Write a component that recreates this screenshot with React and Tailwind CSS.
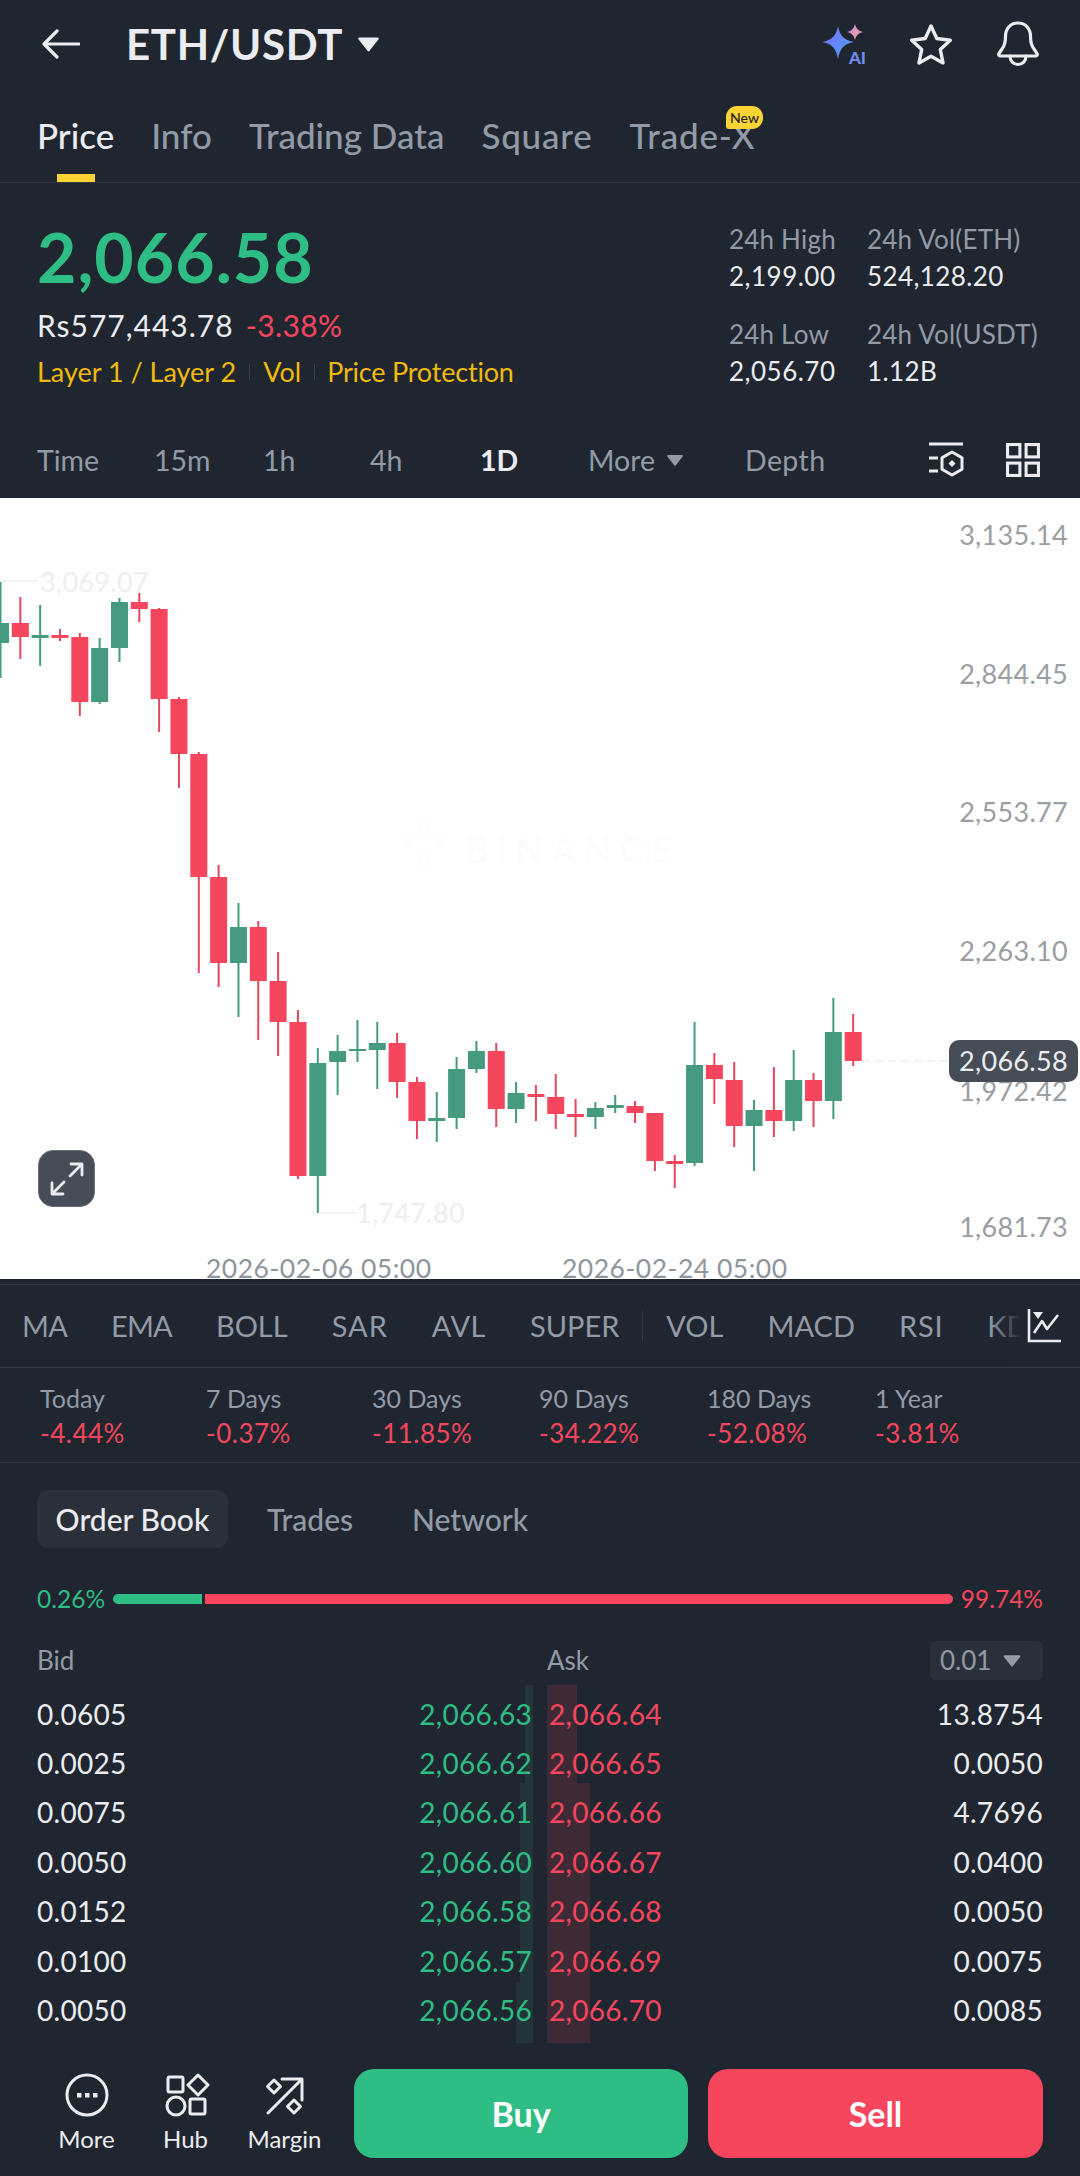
import React from 'react';

const tabs = [
  ['Price', 'text-[#eaecef]'],
  ['Info', ''],
  ['Trading Data', ''],
  ['Square', 'tracking-[0.8px]'],
  ['Trade-X', 'tracking-[0.8px]'],
];
const indicators = [
  ['MA', 'tracking-[-0.8px]'],
  ['EMA', 'tracking-[-0.8px]'],
  ['BOLL', ''],
  ['SAR', 'tracking-[1px]'],
  ['AVL', 'tracking-[0.5px]'],
  ['SUPER', ''],
  ['|', ''],
  ['VOL', ''],
  ['MACD', ''],
  ['RSI', 'tracking-[0.8px]'],
  ['KDJ', ''],
];
const periods = [
  ['Today', '-4.44%'],
  ['7 Days', '-0.37%'],
  ['30 Days', '-11.85%'],
  ['90 Days', '-34.22%'],
  ['180 Days', '-52.08%'],
  ['1 Year', '-3.81%'],
];
const book = [
  ['0.0605', '2,066.63', '2,066.64', '13.8754'],
  ['0.0025', '2,066.62', '2,066.65', '0.0050'],
  ['0.0075', '2,066.61', '2,066.66', '4.7696'],
  ['0.0050', '2,066.60', '2,066.67', '0.0400'],
  ['0.0152', '2,066.58', '2,066.68', '0.0050'],
  ['0.0100', '2,066.57', '2,066.69', '0.0075'],
  ['0.0050', '2,066.56', '2,066.70', '0.0085'],
];
// wick top, wick bottom, body top, body bottom (page px, chart starts at 498)
const candles = [
  ['g', 582, 678, 623, 643], ['r', 597, 659, 623, 637], ['g', 605, 666, 635, 638], ['r', 629, 641, 635, 638],
  ['r', 633, 716, 637, 702], ['g', 638, 704, 648, 702], ['g', 598, 662, 602, 648], ['r', 593, 622, 602, 609],
  ['r', 608, 732, 609, 699], ['r', 697, 788, 699, 754], ['r', 752, 973, 754, 877], ['r', 865, 987, 877, 963],
  ['g', 903, 1017, 927, 963], ['r', 921, 1040, 927, 981], ['r', 952, 1056, 981, 1022], ['r', 1010, 1179, 1022, 1176],
  ['g', 1048, 1213, 1063, 1176], ['g', 1035, 1095, 1051, 1062], ['g', 1020, 1062, 1049, 1051], ['g', 1022, 1089, 1043, 1050],
  ['r', 1033, 1098, 1043, 1082], ['r', 1077, 1139, 1082, 1121], ['g', 1092, 1142, 1118, 1121], ['g', 1057, 1129, 1069, 1118],
  ['g', 1041, 1073, 1051, 1069], ['r', 1043, 1127, 1051, 1109], ['g', 1082, 1123, 1093, 1109], ['r', 1085, 1121, 1094, 1097],
  ['r', 1074, 1129, 1097, 1114], ['r', 1099, 1137, 1114, 1117], ['g', 1102, 1129, 1108, 1117], ['g', 1095, 1113, 1105, 1108],
  ['r', 1101, 1123, 1106, 1113], ['r', 1113, 1171, 1113, 1161], ['r', 1155, 1188, 1161, 1164], ['g', 1022, 1166, 1065, 1163],
  ['r', 1053, 1104, 1065, 1079], ['r', 1062, 1147, 1080, 1126], ['g', 1100, 1171, 1110, 1126], ['r', 1067, 1137, 1110, 1121],
  ['g', 1050, 1131, 1080, 1121], ['r', 1073, 1127, 1080, 1101], ['g', 998, 1119, 1032, 1101], ['r', 1014, 1066, 1032, 1061],
];
const axis = [
  ['3,135.14', 'top-[19px]'],
  ['2,844.45', 'top-[158px]'],
  ['2,553.77', 'top-[296px]'],
  ['2,263.10', 'top-[435px]'],
  ['1,972.42', 'top-[575px]'],
  ['1,681.73', 'top-[711px]'],
];

const Caret = ({ className }) => (
  <svg viewBox="0 0 16 12" className={className} fill="currentColor">
    <path d="M1.5 1h13a.8.8 0 0 1 .6 1.3L8.6 10.6a.8.8 0 0 1-1.2 0L.9 2.3A.8.8 0 0 1 1.5 1z" />
  </svg>
);

const Candles = () => (
  <svg viewBox="0 498 1080 781" className="absolute inset-0 w-full h-full">
    {candles.map(([c, wt, wb, bt, bb], i) => {
      const x = 0.5 + i * 19.83;
      const fill = c === 'g' ? '#459a80' : '#f6465d';
      return (
        <g key={i} fill={fill}>
          <rect x={x - 1} y={wt} width="2" height={wb - wt} fill={c === 'g' ? '#459a80' : '#e0485f'} />
          <rect x={x - 8.5} y={bt} width="17" height={bb - bt} />
        </g>
      );
    })}
    <line x1="2" y1="581" x2="38" y2="581" stroke="#ededed" strokeWidth="1.5" />
    <line x1="320" y1="1213" x2="356" y2="1213" stroke="#ededed" strokeWidth="1.5" />
    <line x1="862" y1="1061" x2="949" y2="1061" stroke="#eeeeee" strokeWidth="1.5" strokeDasharray="8 5" />
    <g fill="#fcfcfc">
      <path d="M424 820l8 8-8 8-8-8zM408 836l6 6-6 6-6-6zM440 836l6 6-6 6-6-6zM424 852l8 8-8 8-8-8z" />
    </g>
  </svg>
);

const App = () => {
  return (
    <div className="w-[1080px] h-[2176px] bg-[#1f2630] overflow-hidden flex flex-col text-[#eaecef] font-['Lato','Liberation_Sans',sans-serif]">
      {/* Header */}
      <div className="h-[88px] flex items-center pl-[42px] pr-[41px]">
        <svg viewBox="0 0 38 30" className="w-[38px] h-[30px]" fill="none" stroke="#eaecef" strokeWidth="3.2" strokeLinecap="round" strokeLinejoin="round">
          <path d="M37 15H2M15 2L2 15l13 13" />
        </svg>
        <div className="ml-[46px] text-[42px] font-bold tracking-[0.7px]">ETH/USDT</div>
        <Caret className="ml-[14px] w-[23px] h-[17px] text-[#eaecef]" />
        <div className="ml-auto flex items-center">
          <div className="relative w-[44px] h-[40px]">
            <svg viewBox="0 0 44 40" className="w-full h-full">
              <defs>
                <linearGradient id="aiBig" x1="0" y1="0" x2="1" y2="1">
                  <stop offset="0" stopColor="#7a6cf5" />
                  <stop offset="1" stopColor="#4fa3f7" />
                </linearGradient>
                <linearGradient id="aiSmall" x1="0" y1="0" x2="1" y2="1">
                  <stop offset="0" stopColor="#c58af0" />
                  <stop offset="1" stopColor="#f0a88c" />
                </linearGradient>
              </defs>
              <path d="M16 2c2 10 6 14 16 16-10 2-14 6-16 17-2-11-6-15-16-17 10-2 14-6 16-16z" fill="url(#aiBig)" />
              <path d="M33 0c1 4.500 3.500 7 8 8-4.500 1-7 3.500-8 8-1-4.500-3.500-7-8-8 4.500-1 7-3.500 8-8z" fill="url(#aiSmall)" />
            </svg>
            <span className="absolute right-0 top-[26px] text-[17px] leading-[16px] font-black text-[#6f8bf2]">AI</span>
          </div>
          <svg viewBox="0 0 44 42" className="ml-[43px] w-[44px] h-[42px]" fill="none" stroke="#eaecef" strokeWidth="3.4" strokeLinejoin="round">
            <path d="M22 3l5.800 12.500 13.500 1.700-10 9.300 2.700 13.400L22 33.200l-12 6.700 2.700-13.400-10-9.300 13.500-1.700z" />
          </svg>
          <svg viewBox="0 0 42 46" className="ml-[44px] w-[42px] h-[46px]" fill="none" stroke="#eaecef" strokeWidth="3.2" strokeLinejoin="round" strokeLinecap="round">
            <path d="M21 2c-8 0-12.500 6-12.500 13.500 0 6-1 9.500-3.500 12.500l-3 4.500c-.8 1.300 0 2.500 1.500 2.500h35c1.500 0 2.300-1.200 1.500-2.500L37 28c-2.500-3-3.500-6.500-3.500-12.500C33.500 8 29 2 21 2z" />
            <path d="M13 35c0 5 3.500 8.500 8 8.500s8-3.500 8-8.500" />
          </svg>
        </div>
      </div>

      {/* Tabs */}
      <div className="relative h-[95px] border-b border-[#333a45] flex items-center pl-[37px] gap-[37px] text-[35px] text-[#929aa5] font-medium">
        {tabs.map(([t, cls]) => (
          <div key={t} className={cls}>{t}</div>
        ))}
        <span className="absolute left-[726px] top-[18px] w-[37px] h-[23px] rounded-[11px] rounded-bl-[3px] bg-[#fcd535] text-[#1e2329] text-[14px] leading-[23px] text-center">New</span>
        <span className="absolute left-[57px] bottom-0 w-[38px] h-[8px] bg-[#fcd535]" />
      </div>

      {/* Summary */}
      <div className="h-[241px] flex justify-between pl-[37px]">
        <div className="pt-[40px]">
          <div className="h-[68px] leading-[68px] text-[68px] font-bold tracking-[1px] text-[#2ebd85]">2,066.58</div>
          <div className="mt-[14px] h-[40px] leading-[40px] text-[30px] flex">
            <span className="tracking-[1px]">Rs577,443.78</span>
            <span className="ml-[12px] tracking-[0.4px] text-[#f6465d]">-3.38%</span>
          </div>
          <div className="mt-[9px] h-[36px] leading-[36px] text-[27px] text-[#f0b90b] flex items-center">
            <span>Layer 1 / Layer 2</span>
            <span className="mx-[13px] w-[1px] h-[16px] bg-[#3a404a]" />
            <span>Vol</span>
            <span className="mx-[13px] w-[1px] h-[16px] bg-[#3a404a]" />
            <span className="-ml-[1px] tracking-[-0.2px]">Price Protection</span>
          </div>
        </div>
        <div className="w-[351px] pt-[38px] grid grid-cols-[138px_1fr] text-[26px] leading-[36px] content-start">
          <div className="tracking-[0.2px] text-[#929aa5]">24h High</div>
          <div className="tracking-[0.2px] text-[#929aa5]">24h Vol(ETH)</div>
          <div className="mt-[1px] tracking-[0.5px]">2,199.00</div>
          <div className="mt-[1px] tracking-[0.4px]">524,128.20</div>
          <div className="mt-[22px] tracking-[0.2px] text-[#929aa5]">24h Low</div>
          <div className="mt-[22px] tracking-[0.2px] text-[#929aa5]">24h Vol(USDT)</div>
          <div className="mt-[1px] tracking-[0.5px]">2,056.70</div>
          <div className="mt-[1px] tracking-[0.4px]">1.12B</div>
        </div>
      </div>

      {/* Intervals */}
      <div className="h-[74px] pb-[2px] flex items-center pl-[37px] pr-[40px] text-[28.5px] text-[#929aa5]">
        <span className="w-[117px]">Time</span>
        <span className="w-[109px]">15m</span>
        <span className="w-[107px]">1h</span>
        <span className="w-[110px]">4h</span>
        <span className="w-[108px] font-bold text-[#eaecef]">1D</span>
        <span>More</span>
        <Caret className="ml-[11px] w-[18px] h-[13px] text-[#929aa5]" />
        <span className="ml-[61px] tracking-[0.4px]">Depth</span>
        <div className="ml-auto flex items-center">
          <svg viewBox="0 0 36 40" className="w-[36px] h-[40px]" fill="none" stroke="#eaecef" strokeWidth="3">
            <path d="M1 4h34M1 18h9M1 31h9" />
            <path d="M24 12l10 5.800v11.400L24 35l-10-5.800V17.800z" strokeLinejoin="round" />
            <path d="M24 20l3.500 3.500-3.500 3.500-3.500-3.500z" fill="#eaecef" stroke="none" />
          </svg>
          <svg viewBox="0 0 33 33" className="ml-[42px] w-[34px] h-[34px]" fill="none" stroke="#eaecef" strokeWidth="3">
            <rect x="1.500" y="1.500" width="12" height="12" />
            <rect x="19.500" y="1.500" width="12" height="12" />
            <rect x="1.500" y="19.500" width="12" height="12" />
            <rect x="19.500" y="19.500" width="12" height="12" />
          </svg>
        </div>
      </div>

      {/* Chart */}
      <div className="relative h-[781px] bg-white overflow-hidden shrink-0">
        <Candles />
        <span className="absolute left-[465px] top-[324px] text-[36px] font-bold tracking-[8px] text-[#fcfcfc]">BINANCE</span>
        {axis.map(([v, top]) => (
          <span key={v} className={`absolute right-[12px] text-[27px] leading-[36px] tracking-[0.3px] text-[#9b9ea3] ${top}`}>{v}</span>
        ))}
        <span className="absolute left-[40px] top-[66px] text-[27px] leading-[36px] tracking-[0.3px] text-[#eeeeee]">3,069.07</span>
        <span className="absolute left-[356px] top-[697px] text-[27px] leading-[36px] tracking-[0.3px] text-[#eeeeee]">1,747.80</span>
        <span className="absolute left-[206px] top-[752px] text-[26.5px] leading-[36px] tracking-[0.5px] text-[#8f959c]">2026-02-06 05:00</span>
        <span className="absolute left-[562px] top-[752px] text-[26.5px] leading-[36px] tracking-[0.5px] text-[#8f959c]">2026-02-24 05:00</span>
        <div className="absolute left-[38px] top-[652px] w-[57px] h-[57px] rounded-[15px] bg-[#474d57] border border-[#6a6f78] flex items-center justify-center">
          <svg viewBox="0 0 36 36" className="w-[36px] h-[36px]" fill="none" stroke="#eaecef" strokeWidth="2.800" strokeLinecap="round" strokeLinejoin="round">
            <path d="M21 15L33 3M22 3h11v11M15 21L3 33M14 33H3V22" />
          </svg>
        </div>
        <div className="absolute left-[949px] top-[542px] w-[129px] h-[42px] rounded-[10px] bg-[#474d57] text-[27px] leading-[42px] tracking-[0.3px] text-center text-[#eaecef]">2,066.58</div>
      </div>

      {/* Indicators */}
      <div className="relative mt-[5px] h-[84px] border-y border-[#333a45] flex items-center pl-[22px] gap-[44px] text-[29px] text-[#929aa5] overflow-hidden">
        {indicators.map(([t, cls], i) =>
          t === '|' ? (
            <span key={i} className="-mx-[21px] w-[1px] h-[30px] bg-[#333a45] shrink-0" />
          ) : (
            <span key={t} className={`shrink-0 ${cls}`}>{t}</span>
          )
        )}
        <div className="absolute right-0 top-0 h-full w-[90px] flex items-center justify-end pr-[19px] bg-gradient-to-r from-transparent to-[#1f2630] to-[35%]">
          <svg viewBox="0 0 34 34" className="w-[34px] h-[34px]" fill="none" stroke="#eaecef" strokeWidth="2.600">
            <path d="M2 0v32h32" />
            <path d="M7 24l8-12 5 8 11-14" strokeLinejoin="round" />
            <path d="M6 3h10l-5 7z" fill="#eaecef" stroke="none" />
          </svg>
        </div>
      </div>

      {/* Period changes */}
      <div className="h-[95px] border-b border-[#333a45] pt-[13px] pl-[40px] grid grid-cols-[166px_166px_167px_168px_168px_1fr] text-[25px] leading-[35px]">
        {periods.map(([label, value]) => (
          <div key={label}>
            <div className="text-[#929aa5]">{label}</div>
            <div className="text-[26px] tracking-[0.5px] text-[#f6465d]">{value}</div>
          </div>
        ))}
      </div>

      {/* Book tabs */}
      <div className="mt-[27px] h-[58px] pl-[37px] flex items-center text-[30px] text-[#929aa5] font-medium">
        <div className="w-[191px] h-full rounded-[12px] bg-[#2a303a] text-[#eaecef] flex items-center justify-center">Order Book</div>
        <span className="ml-[39px]">Trades</span>
        <span className="ml-[59px]">Network</span>
      </div>

      {/* Ratio bar */}
      <div className="mt-[36px] h-[30px] px-[37px] flex items-center text-[24.5px]">
        <span className="w-[76px] text-[#2ebd85]">0.26%</span>
        <div className="w-[89px] h-[10px] rounded-l-full bg-[#2ebd85]" />
        <div className="ml-[3px] w-[748px] h-[10px] rounded-r-full bg-[#f6465d]" />
        <span className="ml-auto text-[#f6465d]">99.74%</span>
      </div>

      {/* Book header */}
      <div className="mt-[27px] h-[39px] pl-[37px] pr-[37px] flex items-center text-[26px] text-[#929aa5]">
        <span className="w-[510px]">Bid</span>
        <span>Ask</span>
        <div className="ml-auto w-[113px] h-full rounded-[6px] bg-[#2a303a] flex items-center pl-[10px]">
          <span className="w-[46px]">0.01</span>
          <Caret className="ml-[16px] w-[20px] h-[14px] text-[#929aa5]" />
        </div>
      </div>

      {/* Book rows */}
      <div className="relative mt-[9px] h-[346px] text-[28px]">
        <div className="absolute left-[525px] top-[-4px] w-[8px] h-[98px] bg-[#24353a]" />
        <div className="absolute left-[520px] top-[94px] w-[13px] h-[199px] bg-[#24353a]" />
        <div className="absolute left-[516px] top-[293px] w-[17px] h-[61px] bg-[#24353a]" />
        <div className="absolute left-[547px] top-[-4px] w-[30px] h-[98px] bg-[#3e2a35]" />
        <div className="absolute left-[547px] top-[94px] w-[43px] h-[260px] bg-[#3e2a35]" />
        {book.map(([bid, bidPrice, askPrice, ask]) => (
          <div key={bidPrice} className="relative h-[49.4px] pl-[37px] pr-[37px] flex items-center tracking-[0.3px]">
            <span className="w-[380px]">{bid}</span>
            <span className="w-[115px] text-right text-[#2ebd85]">{bidPrice}</span>
            <span className="ml-[17px] text-[#f6465d]">{askPrice}</span>
            <span className="ml-auto">{ask}</span>
          </div>
        ))}
      </div>

      {/* Bottom actions */}
      <div className="mt-[34px] h-[89px] pl-[37px] pr-[37px] flex">
        <div className="w-[297px] flex text-[24px]">
          <div className="w-[99px] flex flex-col items-center">
            <svg viewBox="0 0 48 48" className="mt-[2px] w-[48px] h-[48px]" fill="none" stroke="#eaecef" strokeWidth="3">
              <circle cx="24" cy="24" r="20" />
              <rect x="14" y="22" width="4.500" height="4.500" fill="#eaecef" stroke="none" />
              <rect x="22" y="22" width="4.500" height="4.500" fill="#eaecef" stroke="none" />
              <rect x="30" y="22" width="4.500" height="4.500" fill="#eaecef" stroke="none" />
            </svg>
            <span className="mt-[4px] leading-[32px]">More</span>
          </div>
          <div className="w-[99px] flex flex-col items-center">
            <svg viewBox="0 0 48 48" className="mt-[2px] w-[48px] h-[48px]" fill="none" stroke="#eaecef" strokeWidth="3">
              <rect x="6" y="6" width="15" height="15" rx="1.500" />
              <path d="M36 4l10 10-10 10-10-10z" strokeLinejoin="round" />
              <circle cx="14" cy="35" r="9" />
              <rect x="28" y="28" width="15" height="15" rx="1.500" />
            </svg>
            <span className="mt-[4px] leading-[32px]">Hub</span>
          </div>
          <div className="w-[99px] flex flex-col items-center">
            <svg viewBox="0 0 48 48" className="mt-[2px] w-[48px] h-[48px]" fill="none" stroke="#eaecef" strokeWidth="3" strokeLinecap="round" strokeLinejoin="round">
              <path d="M7 42L41 8M21 8h20v21" />
              <path d="M13 9l6.500 6.500L13 22l-6.500-6.500zM33 29l6.500 6.500L33 42l-6.500-6.500z" />
            </svg>
            <span className="mt-[4px] leading-[32px]">Margin</span>
          </div>
        </div>
        <button className="ml-[20px] w-[334px] h-full rounded-[20px] bg-[#2ebd85] text-white text-[34px] font-bold">Buy</button>
        <button className="ml-[20px] flex-1 h-full rounded-[20px] bg-[#f6465d] text-white text-[34px] font-bold">Sell</button>
      </div>
    </div>
  );
};

export default App;
